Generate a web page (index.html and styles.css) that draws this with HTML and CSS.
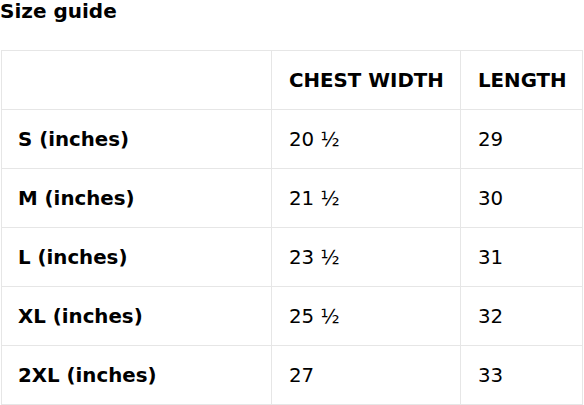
FILE: index.html
```html
<!DOCTYPE html>
<html>
<head>
<meta charset="utf-8">
<link rel="stylesheet" href="styles.css">
</head>
<body>
<h2 class="title">Size guide</h2>
<table class="sizes">
  <colgroup>
    <col class="c1"><col class="c2"><col class="c3">
  </colgroup>
  <thead>
    <tr><th></th><th>CHEST WIDTH</th><th>LENGTH</th></tr>
  </thead>
  <tbody>
    <tr><th>S (inches)</th><td>20 ½</td><td>29</td></tr>
    <tr><th>M (inches)</th><td>21 ½</td><td>30</td></tr>
    <tr><th>L (inches)</th><td>23 ½</td><td>31</td></tr>
    <tr><th>XL (inches)</th><td>25 ½</td><td>32</td></tr>
    <tr><th>2XL (inches)</th><td>27</td><td>33</td></tr>
  </tbody>
</table>
</body>
</html>
```
FILE: styles.css
```css
html, body {
  margin: 0;
  padding: 0;
  background: #fff;
}
body {
  font-family: "DejaVu Sans", Verdana, sans-serif;
  color: #000;
}
.title {
  margin: 0;
  font-size: 20px;
  line-height: 23px;
  font-weight: bold;
  height: 50px;
}
.sizes {
  border-collapse: collapse;
  margin-left: 1px;
  width: 581px;
  table-layout: fixed;
  font-size: 19.8px;
}
.c1 { width: 270px; }
.c2 { width: 189px; }
.c3 { width: 122px; }
.sizes th, .sizes td {
  border: 1px solid #e6e6e6;
  height: 59px;
  padding: 0 6px 0 17px;
  text-align: left;
  vertical-align: middle;
  white-space: nowrap;
  box-sizing: border-box;
}
.sizes tr > :first-child { padding-left: 16px; }
.sizes th { font-weight: bold; }
.sizes td { font-weight: normal; }
```
